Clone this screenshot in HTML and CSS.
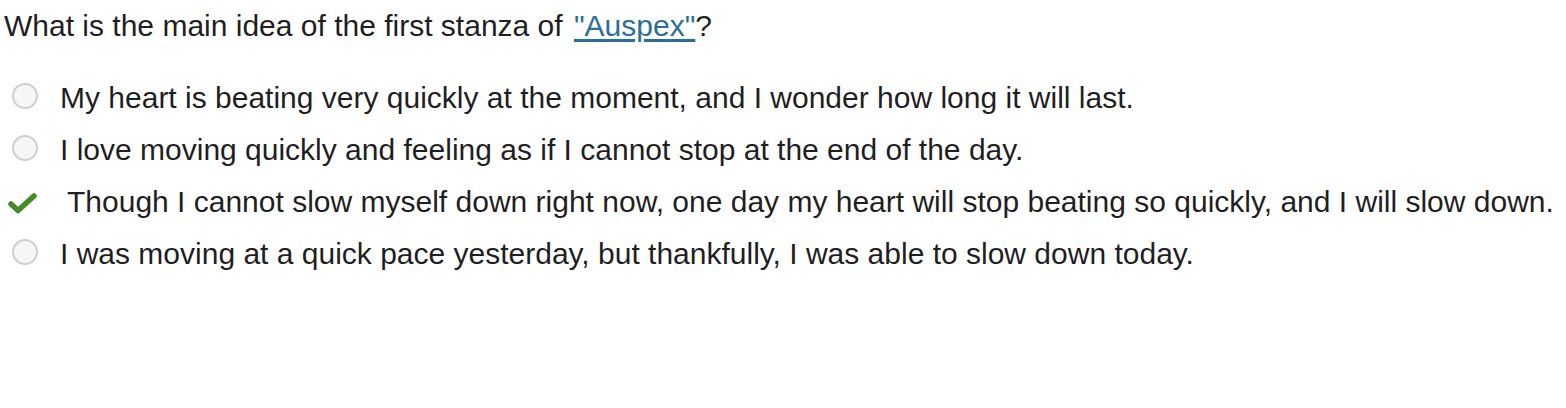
FILE: index.html
```html
<!DOCTYPE html>
<html>
<head>
<meta charset="utf-8">
<link rel="stylesheet" href="styles.css">
</head>
<body>
<div class="question">What is the main idea of the first stanza of <a class="link" href="#">"Auspex"</a>?</div>
<ul class="options">
  <li class="option"><span class="radio"></span><span class="text">My heart is beating very quickly at the moment, and I wonder how long it will last.</span></li>
  <li class="option"><span class="radio"></span><span class="text">I love moving quickly and feeling as if I cannot stop at the end of the day.</span></li>
  <li class="option correct"><svg class="check" width="30" height="22" viewBox="0 0 30 22"><path d="M3 12 L10 18.5 L26 4" fill="none" stroke="#468a2a" stroke-width="5.5" stroke-linecap="round" stroke-linejoin="round"/></svg><span class="text">Though I cannot slow myself down right now, one day my heart will stop beating so quickly, and I will slow down.</span></li>
  <li class="option"><span class="radio"></span><span class="text">I was moving at a quick pace yesterday, but thankfully, I was able to slow down today.</span></li>
</ul>
</body>
</html>
```

FILE: styles.css
```css
html, body {
  margin: 0;
  padding: 0;
  background: #fff;
}
body {
  font-family: "Liberation Sans", Arial, sans-serif;
  font-size: 30px;
  color: #1f1f1f;
  padding: 8px 4px;
}
.question {
  line-height: 36px;
}
.link {
  color: #2b6f96;
  text-decoration: underline;
  text-underline-offset: 3px;
  margin-left: 3px;
}
.options {
  list-style: none;
  margin: 28px 0 0 0;
  padding: 0;
}
.option {
  display: flex;
  align-items: center;
  height: 52px;
}
.radio {
  box-sizing: border-box;
  width: 26px;
  height: 26px;
  border-radius: 50%;
  border: 2px solid #cfcfcf;
  background: #f6f6f6;
  margin-left: 8px;
  margin-right: 22px;
  flex: none;
  position: relative;
  top: -2px;
}
.check {
  margin-left: 4px;
  margin-right: 29px;
  flex: none;
  position: relative;
  top: 1px;
}
.text {
  white-space: nowrap;
}
```
